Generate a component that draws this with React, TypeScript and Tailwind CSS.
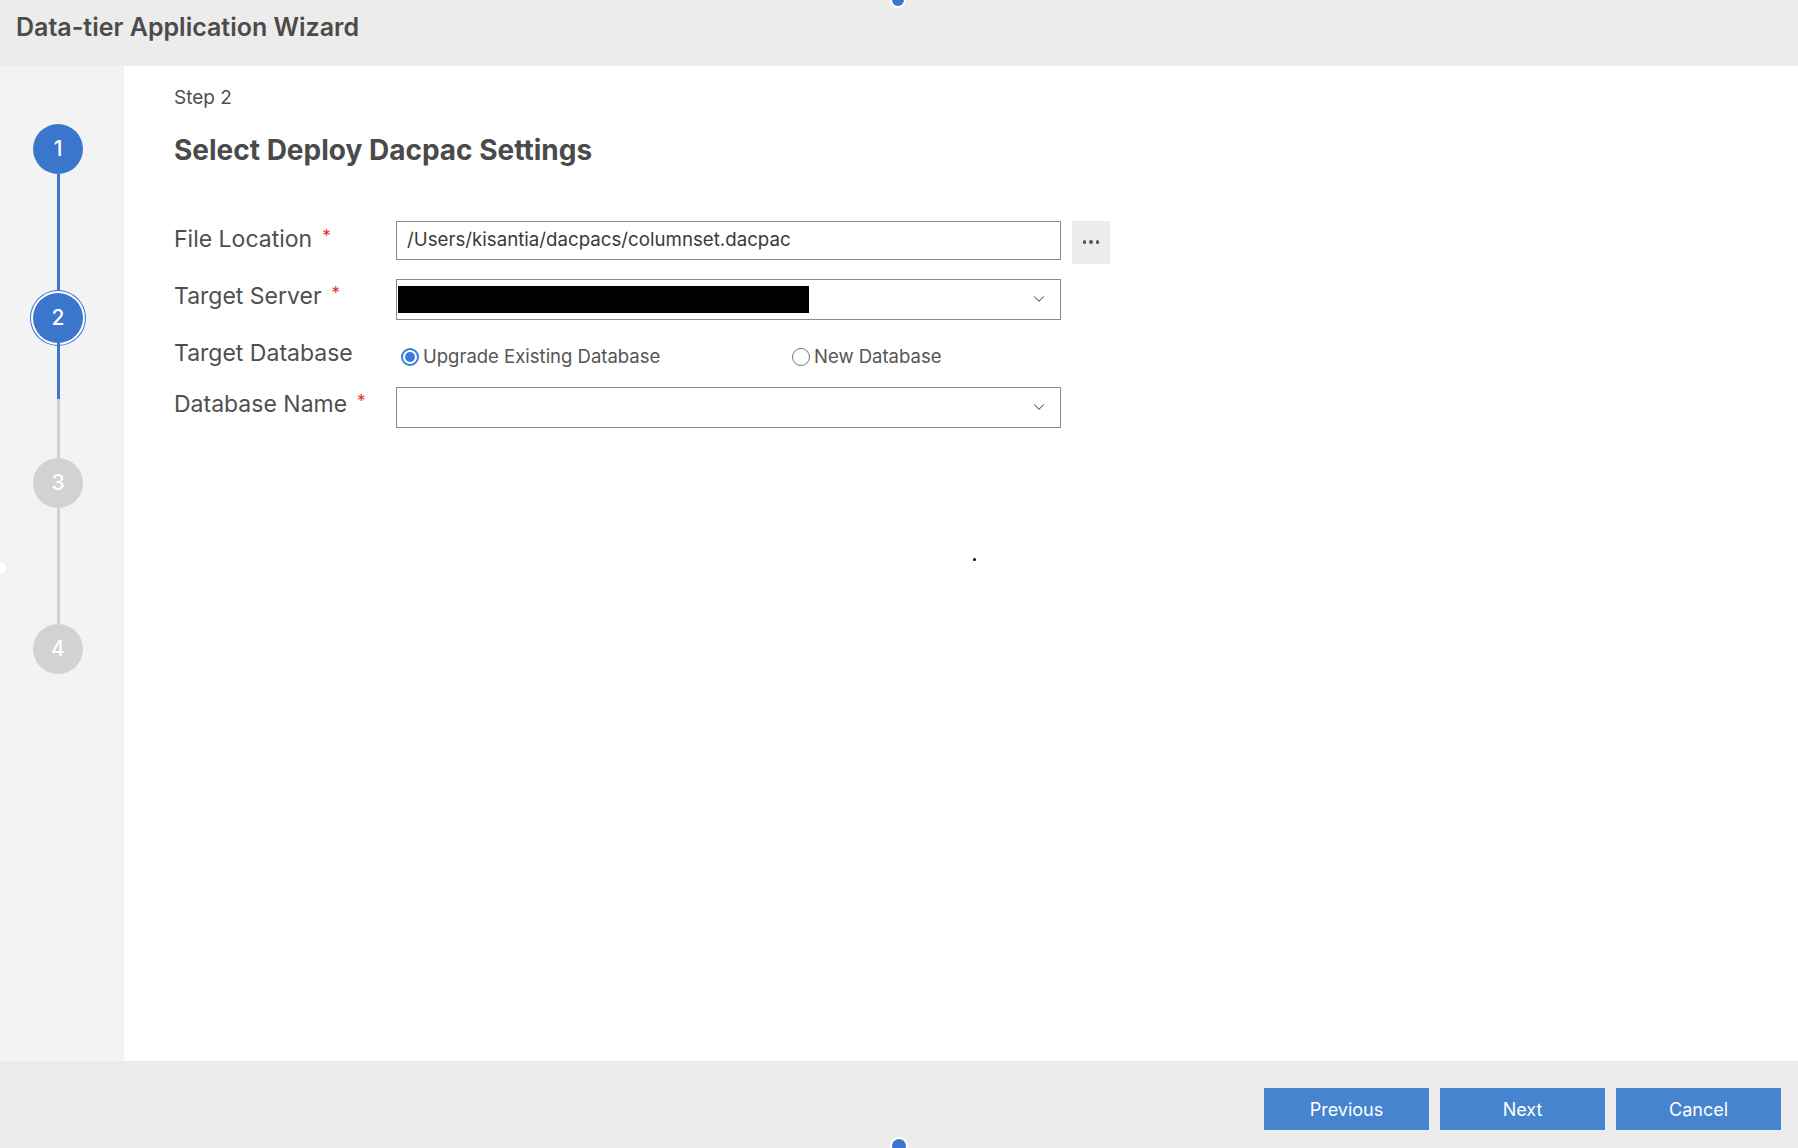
import { ChevronDown } from "lucide-react";

const steps = [
  { n: 1, state: "done" },
  { n: 2, state: "current" },
  { n: 3, state: "todo" },
  { n: 4, state: "todo" },
];

function StepCircle({ n, state }: { n: number; state: string }) {
  const base =
    "w-[50px] h-[50px] rounded-full flex items-center justify-center text-[21px] font-medium text-white shrink-0";
  if (state === "current") {
    return (
      <div className={`${base} bg-[#3a76cc] shadow-[0_0_0_2px_#ffffff,0_0_0_3px_#3a76cc]`}>{n}</div>
    );
  }
  if (state === "done") return <div className={`${base} bg-[#3a76cc]`}>{n}</div>;
  return <div className={`${base} bg-[#d2d2d2]`}>{n}</div>;
}

function Stepper() {
  return (
    <div className="w-[50px] ml-[33px] flex flex-col items-center pt-[58px]">
      <StepCircle {...steps[0]} />
      <div className="w-[3px] h-[119px] bg-[#3a76cc]" />
      <StepCircle {...steps[1]} />
      <div className="w-[3px] h-[56px] bg-[#3a76cc]" />
      <div className="w-[3px] h-[59px] bg-[#cfcfcf]" />
      <StepCircle {...steps[2]} />
      <div className="w-[3px] h-[116px] bg-[#cfcfcf]" />
      <StepCircle {...steps[3]} />
    </div>
  );
}

function Label({ text, required }: { text: string; required?: boolean }) {
  return (
    <div className="w-[222px] shrink-0 text-[23px] text-[#4f4f4f] leading-none flex items-start gap-[10px] -mt-[6px]">
      <span>{text}</span>
      {required && <span className="text-[#e0302a] text-[17px] leading-none">*</span>}
    </div>
  );
}

function Radio({ checked, label }: { checked?: boolean; label: string }) {
  return (
    <div className="flex items-center gap-[4px] text-[18.5px] text-[#555]">
      {checked ? (
        <span className="w-[18px] h-[18px] rounded-full border-2 border-[#3a7be0] flex items-center justify-center">
          <span className="w-[10px] h-[10px] rounded-full bg-[#3a7be0]" />
        </span>
      ) : (
        <span className="w-[18px] h-[18px] rounded-full border border-[#777] bg-white" />
      )}
      <span>{label}</span>
    </div>
  );
}

export default function App() {
  return (
    <div
      className="relative w-[1798px] h-[1148px] flex flex-col bg-[#ececec] overflow-hidden"
      style={{ fontFamily: "Inter, Roboto, 'Liberation Sans', sans-serif" }}
    >
      <div className="h-[66px] shrink-0 flex items-start pl-[16px] pt-[9px]">
        <h1 className="text-[25px] font-semibold text-[#4b4b4b]">Data-tier Application Wizard</h1>
      </div>

      <div className="flex flex-1 min-h-0">
        <div className="w-[124px] shrink-0 bg-[#f3f3f3]">
          <Stepper />
        </div>

        <div className="flex-1 bg-white pl-[50px] pt-[18px] relative">
          <div className="text-[19px] text-[#4f4f4f]">Step 2</div>
          <h2 className="mt-[16px] text-[28px] font-bold text-[#4a4a4a]">Select Deploy Dacpac Settings</h2>

          <div className="mt-[50px] flex flex-col">
            <div className="flex items-center h-[43px]">
              <Label text="File Location" required />
              <div className="w-[665px] h-[39px] self-start border border-[#8c8c8c] flex items-center px-[10px] text-[18.7px] text-[#3a3a3a]">
                /Users/kisantia/dacpacs/columnset.dacpac
              </div>
              <div className="ml-[11px] w-[38px] h-[43px] bg-[#ececec] flex items-center justify-center gap-[3px]">
                <span className="w-[3.5px] h-[3.5px] rounded-full bg-[#555]" />
                <span className="w-[3.5px] h-[3.5px] rounded-full bg-[#555]" />
                <span className="w-[3.5px] h-[3.5px] rounded-full bg-[#555]" />
              </div>
            </div>

            <div className="flex items-center mt-[15px]">
              <Label text="Target Server" required />
              <div className="w-[665px] h-[41px] border border-[#8c8c8c] flex items-center justify-between pl-[1px] pr-[12px]">
                <div className="w-[411px] h-[27px] bg-black" />
                <ChevronDown size={18} strokeWidth={1.4} className="text-[#555]" />
              </div>
            </div>

            <div className="flex items-center h-[36px] mt-[19px]">
              <Label text="Target Database" />
              <div className="flex items-center pl-[5px]">
                <div className="w-[391px]">
                  <Radio checked label="Upgrade Existing Database" />
                </div>
                <Radio label="New Database" />
              </div>
            </div>

            <div className="flex items-center mt-[12px]">
              <Label text="Database Name" required />
              <div className="w-[665px] h-[41px] border border-[#8c8c8c] flex items-center justify-end pr-[12px]">
                <ChevronDown size={18} strokeWidth={1.4} className="text-[#555]" />
              </div>
            </div>
          </div>

          <span className="absolute left-[849px] top-[492px] w-[3px] h-[3px] rounded-full bg-black" />
        </div>
      </div>

      <div className="h-[87px] shrink-0 flex items-start justify-end gap-[11px] pr-[17px] pt-[27px]">
        <button className="w-[165px] h-[42px] bg-[#4684cf] text-white text-[18px]">Previous</button>
        <button className="w-[165px] h-[42px] bg-[#4684cf] text-white text-[18px]">Next</button>
        <button className="w-[165px] h-[42px] bg-[#4684cf] text-white text-[18px]">Cancel</button>
      </div>

      <span className="absolute left-[892px] -top-[6px] w-[12px] h-[12px] rounded-full bg-[#3a76cc] ring-2 ring-white" />
      <span className="absolute left-[892px] top-[1139px] w-[14px] h-[14px] rounded-full bg-[#3a76cc] ring-2 ring-white" />
      <span className="absolute -left-[6px] top-[562px] w-[12px] h-[12px] rounded-full bg-white" />
    </div>
  );
}
